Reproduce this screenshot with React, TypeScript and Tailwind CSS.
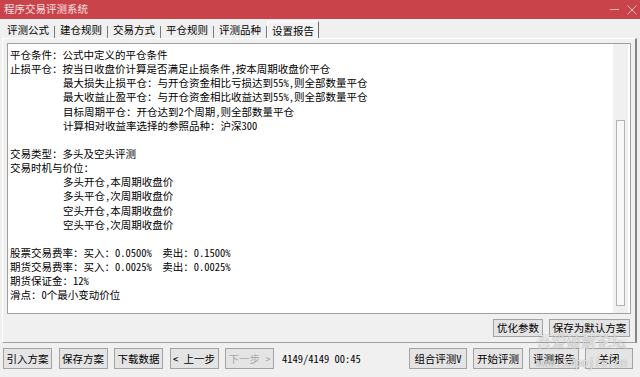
const tabs = ['评测公式', '建仓规则', '交易方式', '平仓规则', '评测品种', '设置报告']

type Line = { text: string; indent?: boolean }

const lines: Line[] = [
  { text: '平仓条件：公式中定义的平仓条件' },
  { text: '止损平仓：按当日收盘价计算是否满足止损条件,按本周期收盘价平仓' },
  { text: '最大损失止损平仓：与开仓资金相比亏损达到55%,则全部数量平仓', indent: true },
  { text: '最大收益止盈平仓：与开仓资金相比收益达到55%,则全部数量平仓', indent: true },
  { text: '目标周期平仓：开仓达到2个周期,则全部数量平仓', indent: true },
  { text: '计算相对收益率选择的参照品种：沪深300', indent: true },
  { text: '' },
  { text: '交易类型：多头及空头评测' },
  { text: '交易时机与价位：' },
  { text: '多头开仓,本周期收盘价', indent: true },
  { text: '多头平仓,次周期收盘价', indent: true },
  { text: '空头开仓,本周期收盘价', indent: true },
  { text: '空头平仓,次周期收盘价', indent: true },
  { text: '' },
  { text: '股票交易费率：买入：0.0500%  卖出：0.1500%' },
  { text: '期货交易费率：买入：0.0025%  卖出：0.0025%' },
  { text: '期货保证金：12%' },
  { text: '滑点：0个最小变动价位' },
]

function Btn({ label, width, height = 'h-[21px]', disabled }: { label: string; width: string; height?: string; disabled?: boolean }) {
  return (
    <div
      className={`${width} ${height} flex shrink-0 items-center justify-center border border-[#a3a3a3] bg-[#e4e4e4] text-[10.5px] ${
        disabled ? 'text-[#a8a8a8]' : 'text-black'
      }`}
    >
      {label}
    </div>
  )
}

export default function App() {
  return (
    <div className="relative flex h-[377px] w-[640px] flex-col overflow-hidden bg-[#f0f0f0] font-['Noto_Sans_Mono_CJK_SC','Noto_Sans_CJK_SC',sans-serif] text-black">
      {/* title bar */}
      <div className="flex h-[19px] shrink-0 items-center justify-between bg-[#c9434b] pl-[4px] pr-[3px]">
        <span className="text-[10.5px] leading-none text-[#f7e1e2]">程序交易评测系统</span>
        <div className="flex items-center gap-[8px]">
          <svg width="9" height="9" viewBox="0 0 9 9">
            <path d="M0 4.5 H9" stroke="#eab9bc" strokeWidth="1" />
          </svg>
          <svg width="10" height="10" viewBox="0 0 10 10">
            <path d="M0.5 0.5 L9.5 9.5 M9.5 0.5 L0.5 9.5" stroke="#eab9bc" strokeWidth="1" />
          </svg>
        </div>
      </div>

      {/* tabs */}
      <div className="flex h-[19px] shrink-0 items-end pl-[2px]">
        {tabs.map((t, i) =>
          i === tabs.length - 1 ? (
            <div
              key={t}
              className="-mb-px flex h-[18px] w-[52px] items-center justify-center border-t border-r border-l border-t-white border-l-white border-r-[#6e6e6e] bg-[#f3f3f3] text-[10.5px]"
            >
              {t}
            </div>
          ) : (
            <div key={t} className="flex h-[16px] w-[53px] items-center">
              <span className="flex-1 text-center text-[10.5px]">{t}</span>
              <span className="h-[12px] w-px self-end bg-[#7a7a7a]" />
            </div>
          ),
        )}
      </div>

      {/* panel */}
      <div className="ml-[2px] mr-[3px] flex h-[305px] shrink-0 flex-col border-t border-l border-r-2 border-b border-t-white border-l-white border-r-[#858585] border-b-[#a0a0a0] pt-[4px] pr-[4px] pl-[4px]">
        <div className="flex h-[271px] border border-[#a0a0a0] bg-white">
          <div className="flex-1 pt-[4px] pl-[2px] text-[10.5px] leading-[14.15px] whitespace-pre">
            {lines.map((l, i) => (
              <div key={i} className={`h-[14.15px] ${l.indent ? 'pl-[53px]' : ''}`}>
                {l.text}
              </div>
            ))}
          </div>
          <div className="mr-[2px] flex w-[15px] flex-col bg-[#f0f0f0] pt-[76px] pb-[7px]">
            <div className="mx-[3px] flex-1 border border-[#b3b3b3] bg-[#f7f7f7]" />
          </div>
        </div>
        <div className="mt-[5px] flex justify-end gap-[6px] pr-[1px]">
          <Btn label="优化参数" width="w-[50px]" height="h-[18px]" />
          <Btn label="保存为默认方案" width="w-[81px]" height="h-[18px]" />
        </div>
      </div>

      {/* bottom bar */}
      <div className="flex flex-1 items-start pt-[5px] pl-[3px] pr-[7px]">
        <div className="flex gap-[6.5px]">
          <Btn label="引入方案" width="w-[49px]" />
          <Btn label="保存方案" width="w-[49px]" />
          <Btn label="下载数据" width="w-[49px]" />
          <Btn label="< 上一步" width="w-[49px]" />
          <Btn label="下一步 >" width="w-[49px]" disabled />
        </div>
        <span className="ml-[8px] flex h-[21px] items-center text-[10.5px] whitespace-pre">4149/4149 00:45</span>
        <div className="ml-auto flex gap-[6px]">
          <Btn label="组合评测V" width="w-[58px]" />
          <Btn label="开始评测" width="w-[50px]" />
          <Btn label="评测报告" width="w-[50px]" />
          <Btn label="关闭" width="w-[48px]" />
        </div>
      </div>

      {/* watermark */}
      <div className="pointer-events-none absolute top-[333px] left-[536px] flex flex-col items-center leading-none text-white/75 [text-shadow:0_0_1px_#7d7d7d]">
        <span className="text-[15px]">吾爱破解论坛</span>
        <span className="mt-[7px] text-[13px]">www.52pojie.cn</span>
      </div>
    </div>
  )
}
